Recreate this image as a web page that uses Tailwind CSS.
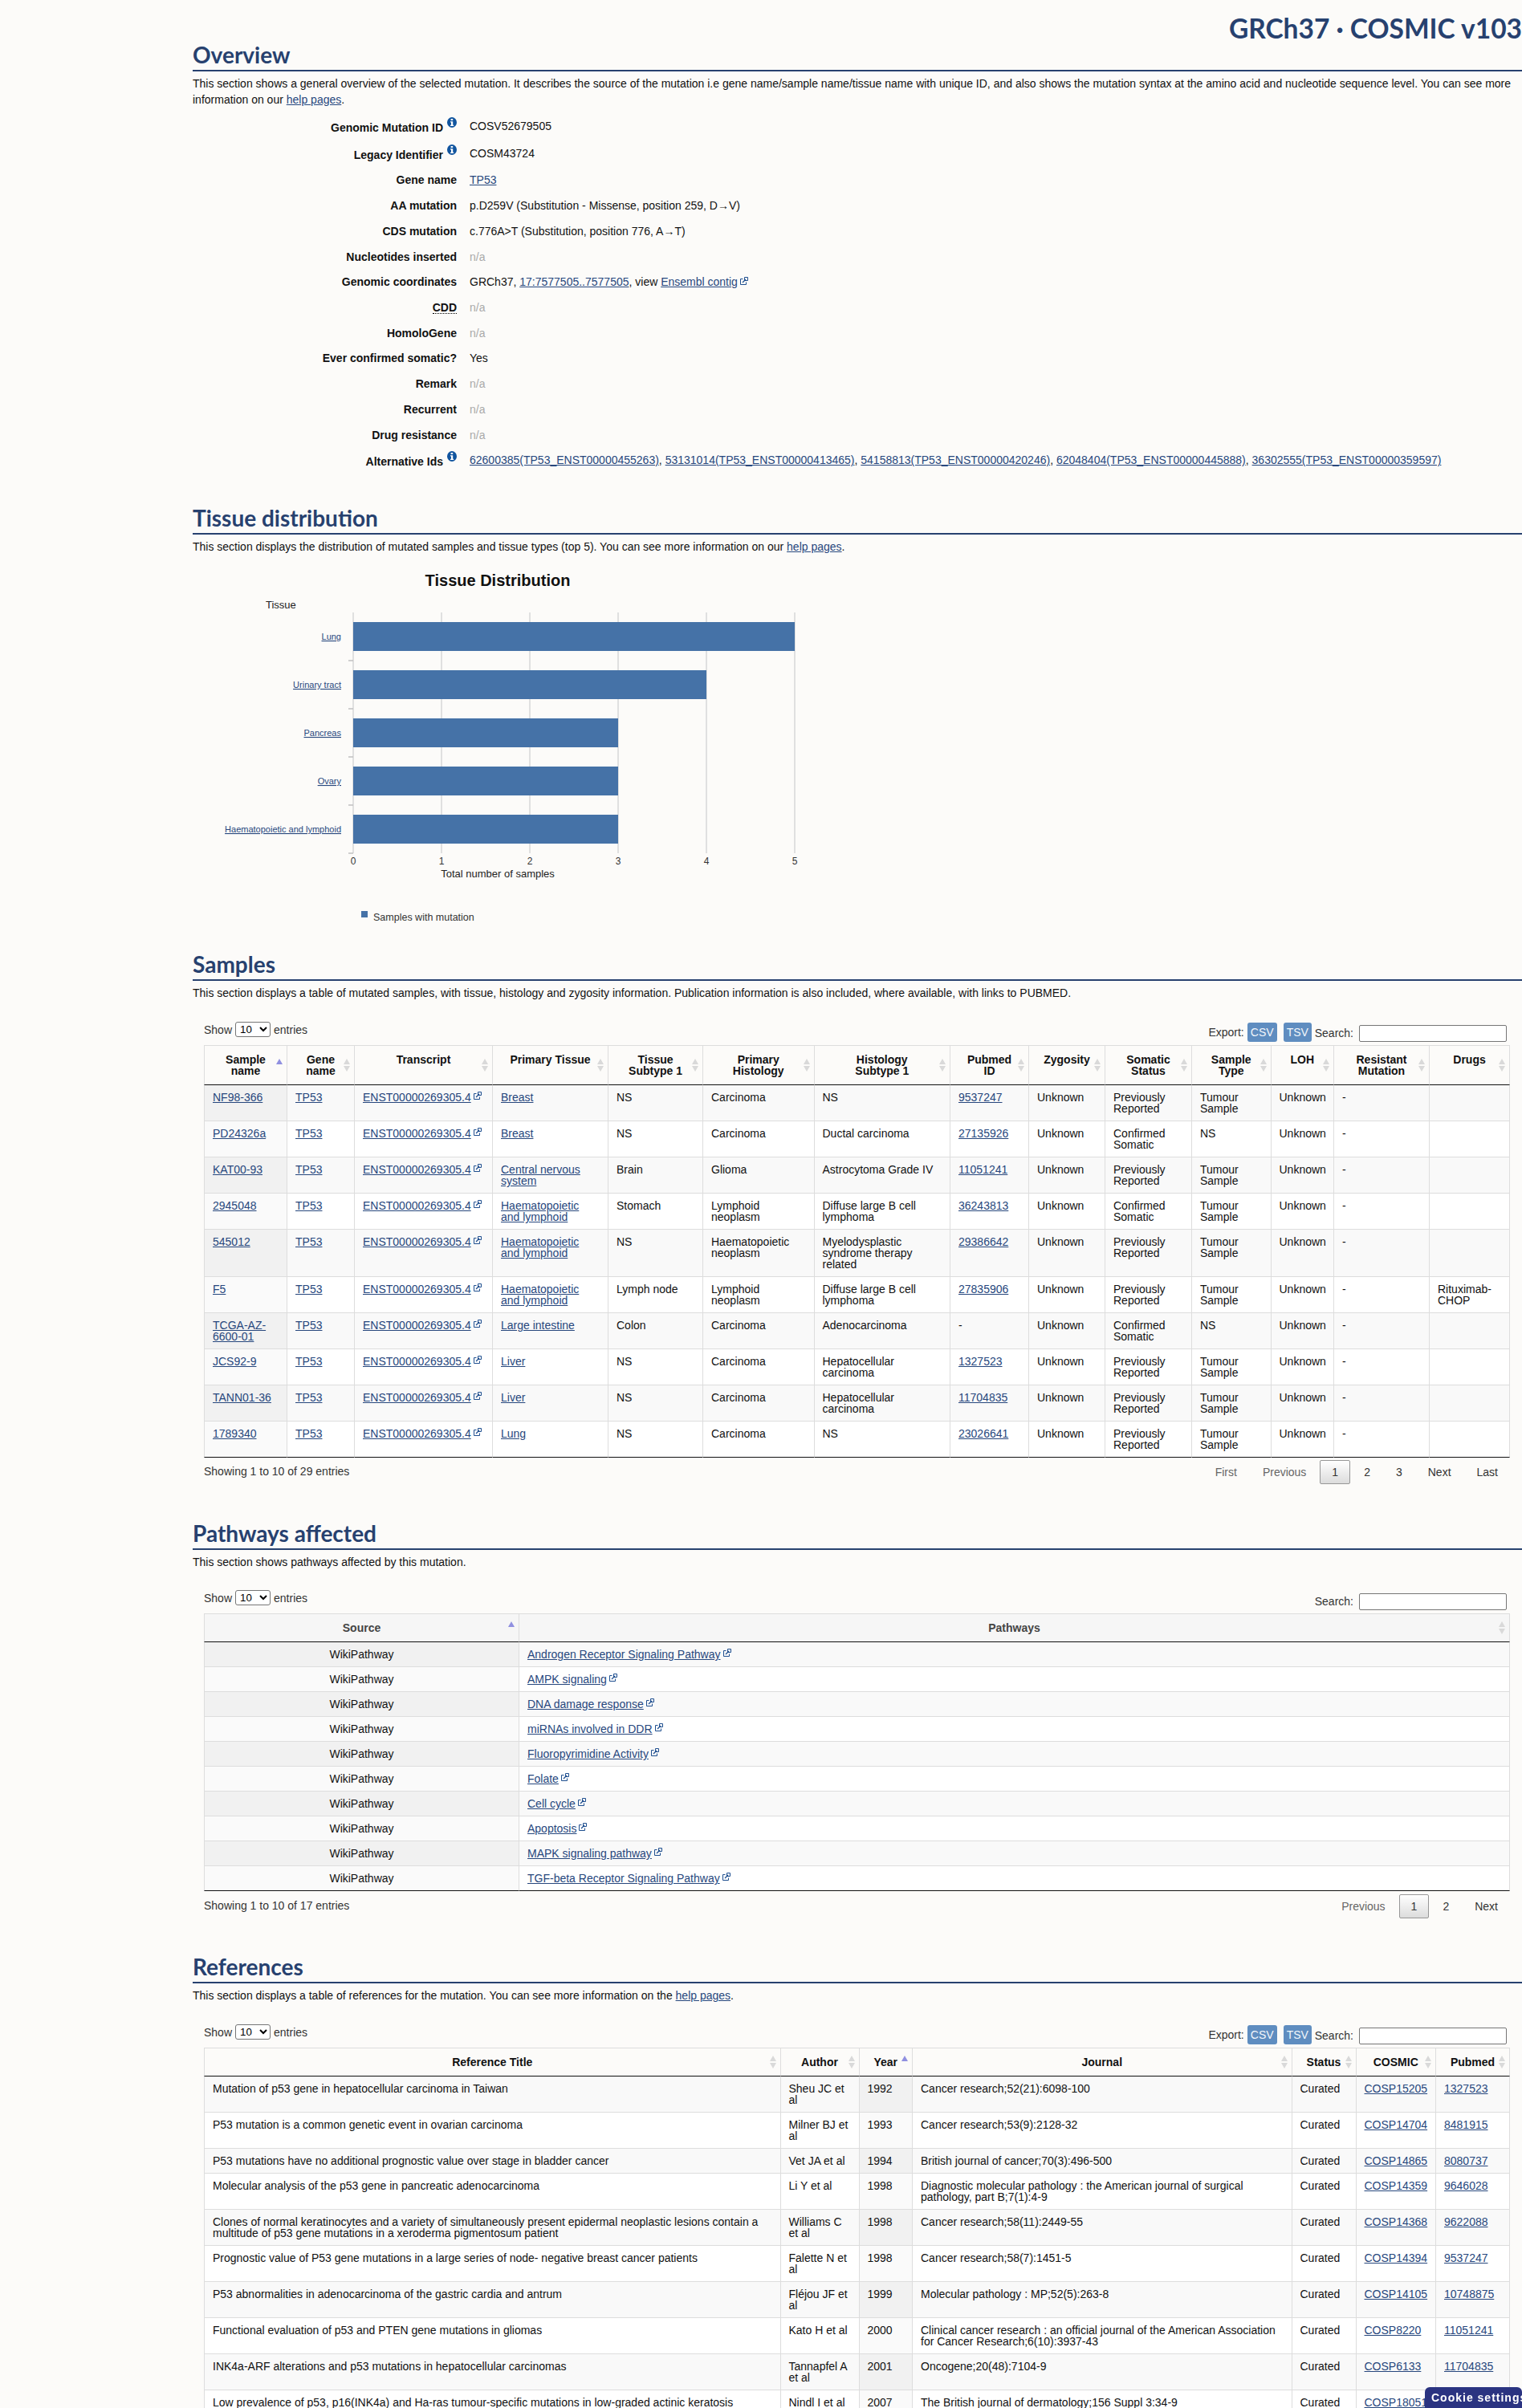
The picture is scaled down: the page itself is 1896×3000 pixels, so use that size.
<!DOCTYPE html>
<html lang="en" class="h-[3000px] overflow-hidden">
<head>
    <meta charset="UTF-8">
    <meta name="viewport" content="width=device-width, initial-scale=1.0">
    <title>COSV52679505 - COSMIC</title>
    <script src="https://cdn.jsdelivr.net/npm/@tailwindcss/browser@4"></script>
</head>
<body class="h-[3000px] overflow-hidden bg-[#fcfbf9] font-['Liberation_Sans',Arial,sans-serif] text-[14px] leading-[20px] text-[#111]">
<main class="pl-[240px]">

    <!-- Overview -->
    <header class="flex h-[89px] items-end justify-between border-b-2 border-[#27416f] text-[#27416f]">
        <h2 class="font-['Lato',sans-serif] text-[28px] leading-[38px] font-bold">Overview</h2>
        <div class="self-start pt-[12px] font-['Lato',sans-serif] text-[33.5px] leading-[46px] font-bold">GRCh37 · COSMIC v103</div>
    </header>
    <p class="pt-[5px]">This section shows a general overview of the selected mutation. It describes the source of the mutation i.e gene name/sample name/tissue name with unique ID, and also shows the mutation syntax at the amino acid and nucleotide sequence level. You can see more information on our <a href="#" class="text-[#27477d] underline">help pages</a>.</p>
    <dl id="overview" class="mt-[6px]"></dl>

    <!-- Tissue distribution -->
    <header class="mt-[17px] flex h-[60px] items-end border-b-2 border-[#27416f] text-[#27416f]">
        <h2 class="font-['Lato',sans-serif] text-[28px] leading-[38px] font-bold">Tissue distribution</h2>
    </header>
    <p class="pt-[5px]">This section displays the distribution of mutated samples and tissue types (top 5). You can see more information on our <a href="#" class="text-[#27477d] underline">help pages</a>.</p>
    <svg class="block" width="800" height="471" viewBox="0 0 800 471" font-family="Liberation Sans, Arial, sans-serif">
        <text x="380" y="39" text-anchor="middle" font-size="20" font-weight="700" fill="#111">Tissue Distribution</text>
        <text x="91" y="67" font-size="13" fill="#222">Tissue</text>
        <g stroke="#e0e0e0" stroke-width="2">
            <line x1="200" y1="72" x2="200" y2="372"/><line x1="310" y1="72" x2="310" y2="372"/><line x1="420" y1="72" x2="420" y2="372"/>
            <line x1="530" y1="72" x2="530" y2="372"/><line x1="640" y1="72" x2="640" y2="372"/><line x1="750" y1="72" x2="750" y2="372"/>
        </g>
        <g stroke="#c0c0c0" stroke-width="1.5">
            <line x1="194" y1="132" x2="200" y2="132"/><line x1="194" y1="192" x2="200" y2="192"/><line x1="194" y1="252" x2="200" y2="252"/>
            <line x1="194" y1="312" x2="200" y2="312"/><line x1="194" y1="372" x2="200" y2="372"/>
        </g>
        <g fill="#4572a7">
            <rect x="200" y="84" width="550" height="36"/><rect x="200" y="144" width="440" height="36"/><rect x="200" y="204" width="330" height="36"/>
            <rect x="200" y="264" width="330" height="36"/><rect x="200" y="324" width="330" height="36"/>
        </g>
        <g font-size="11" fill="#27477d" text-anchor="end" text-decoration="underline">
            <text x="185" y="106">Lung</text><text x="185" y="166">Urinary tract</text><text x="185" y="226">Pancreas</text>
            <text x="185" y="286">Ovary</text><text x="185" y="346">Haematopoietic and lymphoid</text>
        </g>
        <g font-size="12" fill="#333" text-anchor="middle">
            <text x="200" y="386">0</text><text x="310" y="386">1</text><text x="420" y="386">2</text>
            <text x="530" y="386">3</text><text x="640" y="386">4</text><text x="750" y="386">5</text>
        </g>
        <text x="380" y="402" text-anchor="middle" font-size="13" fill="#222">Total number of samples</text>
        <rect x="210" y="444" width="8" height="8" fill="#4572a7"/>
        <text x="225" y="456" font-size="12.5" fill="#333">Samples with mutation</text>
    </svg>

    <!-- Samples -->
    <header class="flex h-[60px] items-end border-b-2 border-[#27416f] text-[#27416f]">
        <h2 class="font-['Lato',sans-serif] text-[28px] leading-[38px] font-bold">Samples</h2>
    </header>
    <p class="pt-[5px]">This section displays a table of mutated samples, with tissue, histology and zygosity information. Publication information is also included, where available, with links to PUBMED.</p>
    <section class="pr-[15px] pl-[14px]">
        <div id="samples-bar" class="mt-[23px] flex h-[32px] justify-between text-[#333]"></div>
        <table id="samples" class="w-[1627px] table-fixed border-separate border-spacing-0 text-[14px] leading-[14px]"></table>
        <div class="flex h-[55px] justify-between pt-[3px] text-[#333]">
            <div class="pt-[7px] leading-[14px]">Showing 1 to 10 of 29 entries</div>
            <div id="samples-pages" class="flex"></div>
        </div>
    </section>

    <!-- Pathways affected -->
    <header class="flex h-[60px] items-end border-b-2 border-[#27416f] text-[#27416f]">
        <h2 class="font-['Lato',sans-serif] text-[28px] leading-[38px] font-bold">Pathways affected</h2>
    </header>
    <p class="pt-[5px]">This section shows pathways affected by this mutation.</p>
    <section class="pr-[15px] pl-[14px]">
        <div id="pathways-bar" class="mt-[22px] flex h-[32px] justify-between text-[#333]"></div>
        <table id="pathways" class="w-[1627px] table-fixed border-separate border-spacing-0 text-[14px] leading-[14px]"></table>
        <div class="flex h-[55px] justify-between pt-[4px] text-[#333]">
            <div class="pt-[7px] leading-[14px]">Showing 1 to 10 of 17 entries</div>
            <div id="pathways-pages" class="flex"></div>
        </div>
    </section>

    <!-- References -->
    <header class="flex h-[60px] items-end border-b-2 border-[#27416f] text-[#27416f]">
        <h2 class="font-['Lato',sans-serif] text-[28px] leading-[38px] font-bold">References</h2>
    </header>
    <p class="pt-[5px]">This section displays a table of references for the mutation. You can see more information on the <a href="#" class="text-[#27477d] underline">help pages</a>.</p>
    <section class="pr-[15px] pl-[14px]">
        <div id="references-bar" class="mt-[23px] flex h-[32px] justify-between text-[#333]"></div>
        <table id="references" class="w-[1627px] table-fixed border-separate border-spacing-0 text-[14px] leading-[14px]"></table>
    </section>
</main>

<button class="fixed right-0 bottom-0 h-[26px] w-[121px] overflow-hidden rounded-t-[6px] bg-[#2b3481] pl-[8px] text-left text-[14px] leading-[26px] font-bold tracking-[1px] whitespace-nowrap text-white">Cookie settings</button>

<script>
    const extIcon = `<svg class="relative top-[-3px] ml-[3px] inline-block" width="10" height="10" viewBox="0 0 10 10" fill="none" stroke="#1f4f8f"><path d="M3.5 2.5H.5v7h7v-3"/><path d="M5.5.5h4v4h-4z" stroke-width="1"/><path d="M3 7l4-4" stroke-width="1.2"/></svg>`;
    const infoIcon = `<svg class="mt-[-3px] ml-[5px] shrink-0 self-start" width="12" height="13" viewBox="0 0 12 13"><ellipse cx="6" cy="6.5" rx="6" ry="6.5" fill="#11559f"/><rect x="4.6" y="2" width="2.6" height="2" fill="#fff"/><path d="M4 5.3h3.2v4.5h1v1.1H4V9.8h1V6.4H4z" fill="#fff"/></svg>`;
    const link = (t, ext) => `<a href="#" class="text-[#27477d] underline">${t}</a>${ext ? extIcon : ''}`;
    const na = '<span class="text-[#aaa]">n/a</span>';

    // Overview rows
    const overview = [
        ['Genomic Mutation ID', 'COSV52679505', 'h-[34px]', true],
        ['Legacy Identifier', 'COSM43724', 'h-[34px]', true],
        ['Gene name', link('TP53'), 'h-[32.5px]'],
        ['AA mutation', 'p.D259V (Substitution - Missense, position 259, D→V)'],
        ['CDS mutation', 'c.776A&gt;T (Substitution, position 776, A→T)'],
        ['Nucleotides inserted', na],
        ['Genomic coordinates', `GRCh37, ${link('17:7577505..7577505')}, view ${link('Ensembl contig', true)}`],
        ['<span class="border-b border-dotted border-black leading-[14px]">CDD</span>', na],
        ['HomoloGene', na],
        ['Ever confirmed somatic?', 'Yes'],
        ['Remark', na],
        ['Recurrent', na],
        ['Drug resistance', na],
        ['Alternative Ids', ['62600385(TP53_ENST00000455263)', '53131014(TP53_ENST00000413465)', '54158813(TP53_ENST00000420246)', '62048404(TP53_ENST00000445888)', '36302555(TP53_ENST00000359597)'].map(a => link(a)).join(', '), '', true],
    ];
    document.getElementById('overview').innerHTML = overview.map(([label, value, h, info]) => `
        <div class="flex items-center ${h || 'h-[31.7px]'}">
            <dt class="flex w-[331px] justify-end pr-[2px] font-bold ${info ? 'translate-y-[2px]' : ''}">${label}${info ? infoIcon : ''}</dt>
            <dd class="ml-[14px] whitespace-nowrap">${value}</dd>
        </div>`).join('');

    // DataTables style toolbar, with or without the export buttons
    const bar = (id, withExport) => {
        document.getElementById(id).innerHTML = `
            <label class="mt-[3px] flex h-[19px] items-center">Show
                <select class="mx-[4px] h-[19px] w-[44px] rounded-[3px] border border-[#767676] bg-white pl-[1px] text-[13.3px] text-black"><option>10</option><option>25</option></select>
                entries</label>
            <div class="mt-[4px] mr-[4px] flex h-[24px] items-center">
                ${withExport ? `<span>Export:</span>
                <button class="ml-[4px] h-[24px] w-[37px] rounded-[3px] bg-[#5f8dc0] text-[#f2f6fb]">CSV</button>
                <button class="ml-[8px] h-[24px] w-[35px] rounded-[3px] bg-[#5f8dc0] text-[#f2f6fb]">TSV</button>` : ''}
                <span class="mt-[2px] ml-[4px]">Search:</span>
                <input class="mt-[3px] ml-[7px] h-[21px] w-[184px] rounded-[2px] border border-[#767676] bg-white" type="text">
            </div>`;
    };

    // Pagination
    const pages = (id, items) => {
        document.getElementById(id).innerHTML = items.map(([t, state]) => {
            if (state === 'current') return `<a class="ml-[2px] h-[30px] rounded-[2px] border border-[#979797] bg-gradient-to-b from-white to-[#dcdcdc] px-[14px] leading-[28px] text-[#333]">${t}</a>`;
            if (state === 'off') return `<a class="ml-[2px] h-[30px] border border-transparent px-[14px] leading-[28px] text-[#666]">${t}</a>`;
            return `<a class="ml-[2px] h-[30px] border border-transparent px-[14px] leading-[28px] text-[#333]">${t}</a>`;
        }).join('');
    };

    const sortIcon = `<svg class="absolute top-1/2 right-[5px] -translate-y-1/2" width="8" height="16" viewBox="0 0 8 16" fill="#d9d9d9"><path d="M4 0l4 7H0zM0 9h8l-4 7z"/></svg>`;
    const sortActive = `<svg class="absolute top-1/2 right-[5px] -translate-y-1/2" width="8" height="16" viewBox="0 0 8 16" fill="#9090e0"><path d="M4 0l4 7H0z"/></svg>`;

    const thead = (cols, sortedIdx, thClass) => `
        <colgroup>${cols.map(c => `<col style="width:${c[1]}px">`).join('')}</colgroup>
        <thead><tr>${cols.map((c, i) => `<th class="relative border-t border-r border-b border-t-[#ddd] border-r-[#ddd] border-b-[#111] px-[10px] py-[10px] text-center align-top font-bold ${i === 0 ? 'border-l border-l-[#ddd]' : ''} ${thClass}">${c[0]}${i === sortedIdx ? sortActive : sortIcon}</th>`).join('')}</tr></thead>`;

    // rows: arrays of cell html
    const tbody = (rows, sortedIdx, centerFirst) => `<tbody>${rows.map((r, ri) => `<tr>${r.map((cell, i) => {
        const odd = ri % 2 === 0;
        const bg = i === sortedIdx ? (odd ? 'bg-[#f1f1f1]' : 'bg-[#fafafa]') : (odd ? 'bg-[#f9f9f9]' : 'bg-white');
        const top = ri === 0 ? '' : 'border-t border-t-[#ddd]';
        const bottom = ri === rows.length - 1 ? 'border-b border-b-[#111]' : '';
        const left = i === 0 ? 'border-l border-l-[#ddd]' : '';
        const center = centerFirst && i === 0 ? 'text-center' : '';
        return `<td class="border-r border-r-[#ddd] px-[10px] py-[8px] align-top ${bg} ${top} ${bottom} ${left} ${center}">${cell}</td>`;
    }).join('')}</tr>`).join('')}</tbody>`;

    // Samples table
    const prev = 'Previously Reported', conf = 'Confirmed Somatic', tum = 'Tumour Sample', hl = 'Haematopoietic and lymphoid';
    const samples = [
        ['NF98-366', 'Breast', 'NS', 'Carcinoma', 'NS', '9537247', prev, tum, ''],
        ['PD24326a', 'Breast', 'NS', 'Carcinoma', 'Ductal carcinoma', '27135926', conf, 'NS', ''],
        ['KAT00-93', 'Central nervous system', 'Brain', 'Glioma', 'Astrocytoma Grade IV', '11051241', prev, tum, ''],
        ['2945048', hl, 'Stomach', 'Lymphoid neoplasm', 'Diffuse large B cell lymphoma', '36243813', conf, tum, ''],
        ['545012', hl, 'NS', 'Haematopoietic neoplasm', 'Myelodysplastic syndrome therapy related', '29386642', prev, tum, ''],
        ['F5', hl, 'Lymph node', 'Lymphoid neoplasm', 'Diffuse large B cell lymphoma', '27835906', prev, tum, 'Rituximab-CHOP'],
        ['TCGA-AZ-6600-01', 'Large intestine', 'Colon', 'Carcinoma', 'Adenocarcinoma', '-', conf, 'NS', ''],
        ['JCS92-9', 'Liver', 'NS', 'Carcinoma', 'Hepatocellular carcinoma', '1327523', prev, tum, ''],
        ['TANN01-36', 'Liver', 'NS', 'Carcinoma', 'Hepatocellular carcinoma', '11704835', prev, tum, ''],
        ['1789340', 'Lung', 'NS', 'Carcinoma', 'NS', '23026641', prev, tum, ''],
    ].map(s => [link(s[0]), link('TP53'), link('ENST00000269305.4', true), link(s[1]), s[2], s[3], s[4], s[5] === '-' ? '-' : link(s[5]), 'Unknown', s[6], s[7], 'Unknown', '-', s[8]]);
    document.getElementById('samples').innerHTML = thead([
        ['Sample<br>name', 104], ['Gene<br>name', 84], ['Transcript', 172], ['Primary Tissue', 144], ['Tissue<br>Subtype 1', 118], ['Primary<br>Histology', 138.5], ['Histology<br>Subtype 1', 169.5],
        ['Pubmed<br>ID', 98], ['Zygosity', 95], ['Somatic<br>Status', 108], ['Sample<br>Type', 98.5], ['LOH', 78.5], ['Resistant<br>Mutation', 119], ['Drugs', 100],
    ], 0, 'bg-[#fcfbf9] text-[#111]') + tbody(samples, 0);

    // Pathways table
    const pathways = ['Androgen Receptor Signaling Pathway', 'AMPK signaling', 'DNA damage response', 'miRNAs involved in DDR', 'Fluoropyrimidine Activity', 'Folate', 'Cell cycle', 'Apoptosis', 'MAPK signaling pathway', 'TGF-beta Receptor Signaling Pathway'];
    document.getElementById('pathways').innerHTML = thead([['Source', 393], ['Pathways', 1234]], 0, 'bg-[#f6f6f6] text-[#444]')
        + tbody(pathways.map(p => ['WikiPathway', link(p, true)]), 0, true);

    // References table
    const refs = [
        ['Mutation of p53 gene in hepatocellular carcinoma in Taiwan', 'Sheu JC et al', '1992', 'Cancer research;52(21):6098-100', 'COSP15205', '1327523'],
        ['P53 mutation is a common genetic event in ovarian carcinoma', 'Milner BJ et al', '1993', 'Cancer research;53(9):2128-32', 'COSP14704', '8481915'],
        ['P53 mutations have no additional prognostic value over stage in bladder cancer', 'Vet JA et al', '1994', 'British journal of cancer;70(3):496-500', 'COSP14865', '8080737'],
        ['Molecular analysis of the p53 gene in pancreatic adenocarcinoma', 'Li Y et al', '1998', 'Diagnostic molecular pathology : the American journal of surgical pathology, part B;7(1):4-9', 'COSP14359', '9646028'],
        ['Clones of normal keratinocytes and a variety of simultaneously present epidermal neoplastic lesions contain a multitude of p53 gene mutations in a xeroderma pigmentosum patient', 'Williams C et al', '1998', 'Cancer research;58(11):2449-55', 'COSP14368', '9622088'],
        ['Prognostic value of P53 gene mutations in a large series of node- negative breast cancer patients', 'Falette N et al', '1998', 'Cancer research;58(7):1451-5', 'COSP14394', '9537247'],
        ['P53 abnormalities in adenocarcinoma of the gastric cardia and antrum', 'Fléjou JF et al', '1999', 'Molecular pathology : MP;52(5):263-8', 'COSP14105', '10748875'],
        ['Functional evaluation of p53 and PTEN gene mutations in gliomas', 'Kato H et al', '2000', 'Clinical cancer research : an official journal of the American Association for Cancer Research;6(10):3937-43', 'COSP8220', '11051241'],
        ['INK4a-ARF alterations and p53 mutations in hepatocellular carcinomas', 'Tannapfel A et al', '2001', 'Oncogene;20(48):7104-9', 'COSP6133', '11704835'],
        ['Low prevalence of p53, p16(INK4a) and Ha-ras tumour-specific mutations in low-graded actinic keratosis', 'Nindl I et al', '2007', 'The British journal of dermatology;156 Suppl 3:34-9', 'COSP18051', '17488404'],
    ].map(r => [r[0], r[1], r[2], r[3], 'Curated', link(r[4]), link(r[5])]);
    document.getElementById('references').innerHTML = thead([['Reference Title', 718.5], ['Author', 98], ['Year', 66.5], ['Journal', 472.5], ['Status', 80], ['COSMIC', 99.5], ['Pubmed', 92]], 2, 'bg-[#fcfbf9] text-[#111]') + tbody(refs, 2);

    bar('samples-bar', true);
    bar('pathways-bar', false);
    bar('references-bar', true);
    pages('samples-pages', [['First', 'off'], ['Previous', 'off'], ['1', 'current'], ['2'], ['3'], ['Next'], ['Last']]);
    pages('pathways-pages', [['Previous', 'off'], ['1', 'current'], ['2'], ['Next']]);
</script>
</body>
</html>
